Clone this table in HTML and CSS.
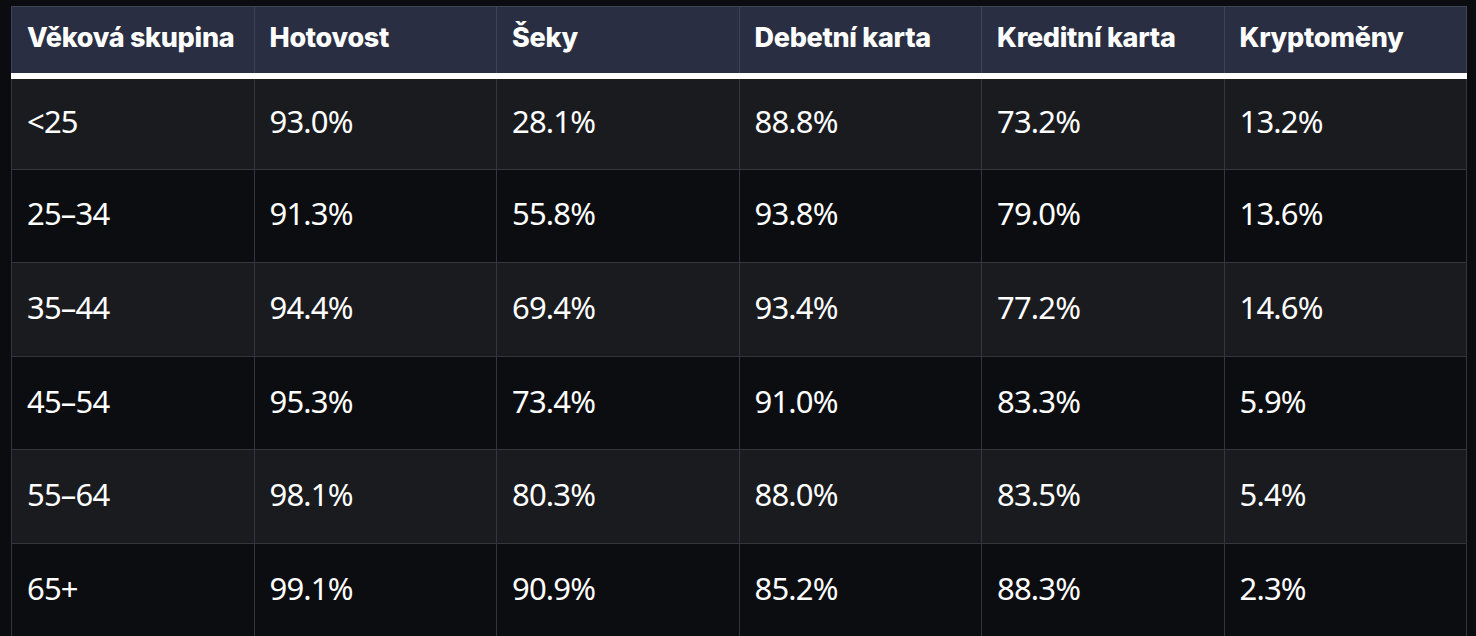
FILE: index.html
```html
<!DOCTYPE html>
<html lang="cs">
<head>
<meta charset="utf-8">
<title>Platební metody podle věku</title>
<link rel="stylesheet" href="styles.css">
</head>
<body>
<table class="data-table">
  <thead>
    <tr>
      <th>Věková skupina</th>
      <th>Hotovost</th>
      <th>Šeky</th>
      <th>Debetní karta</th>
      <th>Kreditní karta</th>
      <th>Kryptoměny</th>
    </tr>
  </thead>
  <tbody>
    <tr><td>&lt;25</td><td>93.0%</td><td>28.1%</td><td>88.8%</td><td>73.2%</td><td>13.2%</td></tr>
    <tr><td>25–34</td><td>91.3%</td><td>55.8%</td><td>93.8%</td><td>79.0%</td><td>13.6%</td></tr>
    <tr><td>35–44</td><td>94.4%</td><td>69.4%</td><td>93.4%</td><td>77.2%</td><td>14.6%</td></tr>
    <tr><td>45–54</td><td>95.3%</td><td>73.4%</td><td>91.0%</td><td>83.3%</td><td>5.9%</td></tr>
    <tr><td>55–64</td><td>98.1%</td><td>80.3%</td><td>88.0%</td><td>83.5%</td><td>5.4%</td></tr>
    <tr><td>65+</td><td>99.1%</td><td>90.9%</td><td>85.2%</td><td>88.3%</td><td>2.3%</td></tr>
  </tbody>
</table>
</body>
</html>
```

FILE: styles.css
```css
html, body {
  background: #0b0c10;
}
body {
  margin: 6px 9px 0 11px;
  color: #ffffff;
}
.data-table {
  width: 100%;
  border-collapse: collapse;
  table-layout: fixed;
  border: 1px solid #3a3b40;
}
.data-table th {
  background: #292e42;
  font-family: Inter, "Liberation Sans", sans-serif;
  font-weight: 800;
  font-size: 27px;
  letter-spacing: -0.3px;
  text-align: left;
  height: 69px;
  padding: 0 15px 5px;
  border: 1px solid #3e4356;
  border-bottom: 6px solid #ffffff;
  box-sizing: border-box;
}
.data-table td {
  font-family: "Noto Sans", "DejaVu Sans", sans-serif;
  font-size: 31px;
  letter-spacing: -0.8px;
  height: 93.6px;
  padding: 0 15px 5px;
  border: 1px solid #35363b;
  box-sizing: border-box;
}
.data-table tbody tr:nth-child(odd) td {
  background: #1a1b1f;
}
.data-table tbody tr:nth-child(even) td {
  background: #0c0d11;
}
```
